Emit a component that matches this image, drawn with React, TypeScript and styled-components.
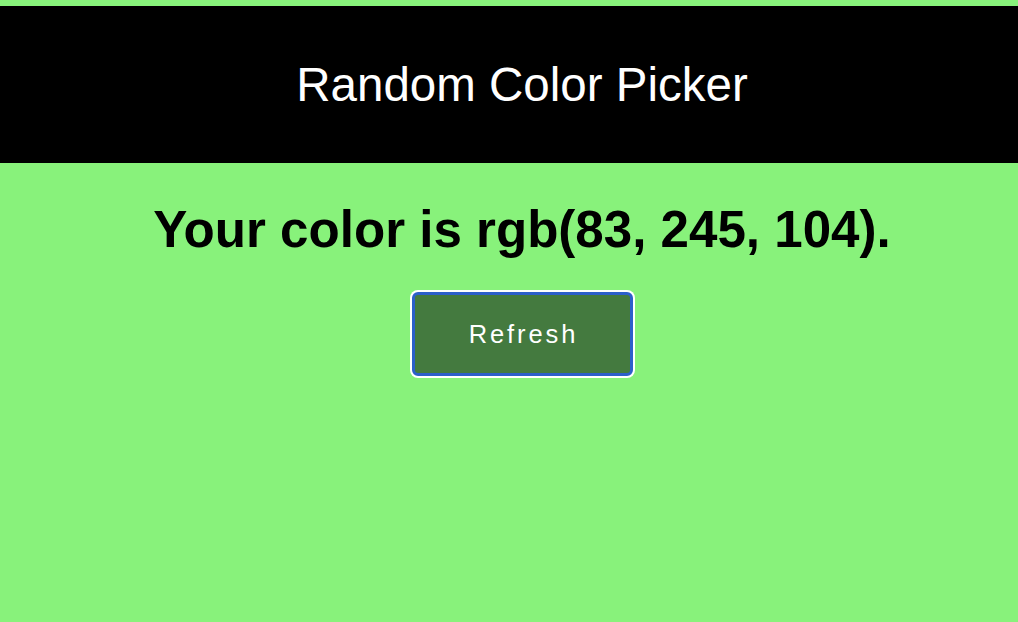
import React from "react";
import styled, { createGlobalStyle } from "styled-components";

const Global = createGlobalStyle`
  html, body {
    margin: 0;
    padding: 0;
    background: #88f27b;
    font-family: "Liberation Sans", Arial, Helvetica, sans-serif;
  }
`;

const Page = styled.div`
  min-height: 622px;
  padding-top: 6px;
  box-sizing: border-box;
  background: #88f27b;
`;

const Header = styled.header`
  height: 157px;
  background: #000;
  display: flex;
  align-items: center;
  justify-content: center;
  padding-left: 26px;
`;

const Title = styled.h1`
  margin: 0;
  color: #fff;
  font-weight: 400;
  font-size: 47.5px;
  line-height: 1;
`;

const Main = styled.main`
  display: flex;
  flex-direction: column;
  align-items: center;
  padding-top: 41px;
  padding-left: 26px;
`;

const Heading = styled.h2`
  margin: 0;
  color: #000;
  font-weight: 700;
  font-size: 51.1px;
  line-height: 1;
`;

const Button = styled.button`
  margin-top: 37px;
  width: 221px;
  height: 84px;
  box-sizing: border-box;
  background: #447a3f;
  color: #fff;
  border: 3px solid #2c5fca;
  border-radius: 6px;
  box-shadow: 0 0 0 2px #fff;
  font-family: "Liberation Sans", Arial, sans-serif;
  font-size: 25.5px;
  letter-spacing: 2.9px;
  padding: 0 0 0 3px;
  cursor: pointer;
  outline: none;
`;

export default function App() {
  return (
    <>
      <Global />
      <Page>
        <Header>
          <Title>Random Color Picker</Title>
        </Header>
        <Main>
          <Heading>Your color is rgb(83, 245, 104).</Heading>
          <Button>Refresh</Button>
        </Main>
      </Page>
    </>
  );
}
